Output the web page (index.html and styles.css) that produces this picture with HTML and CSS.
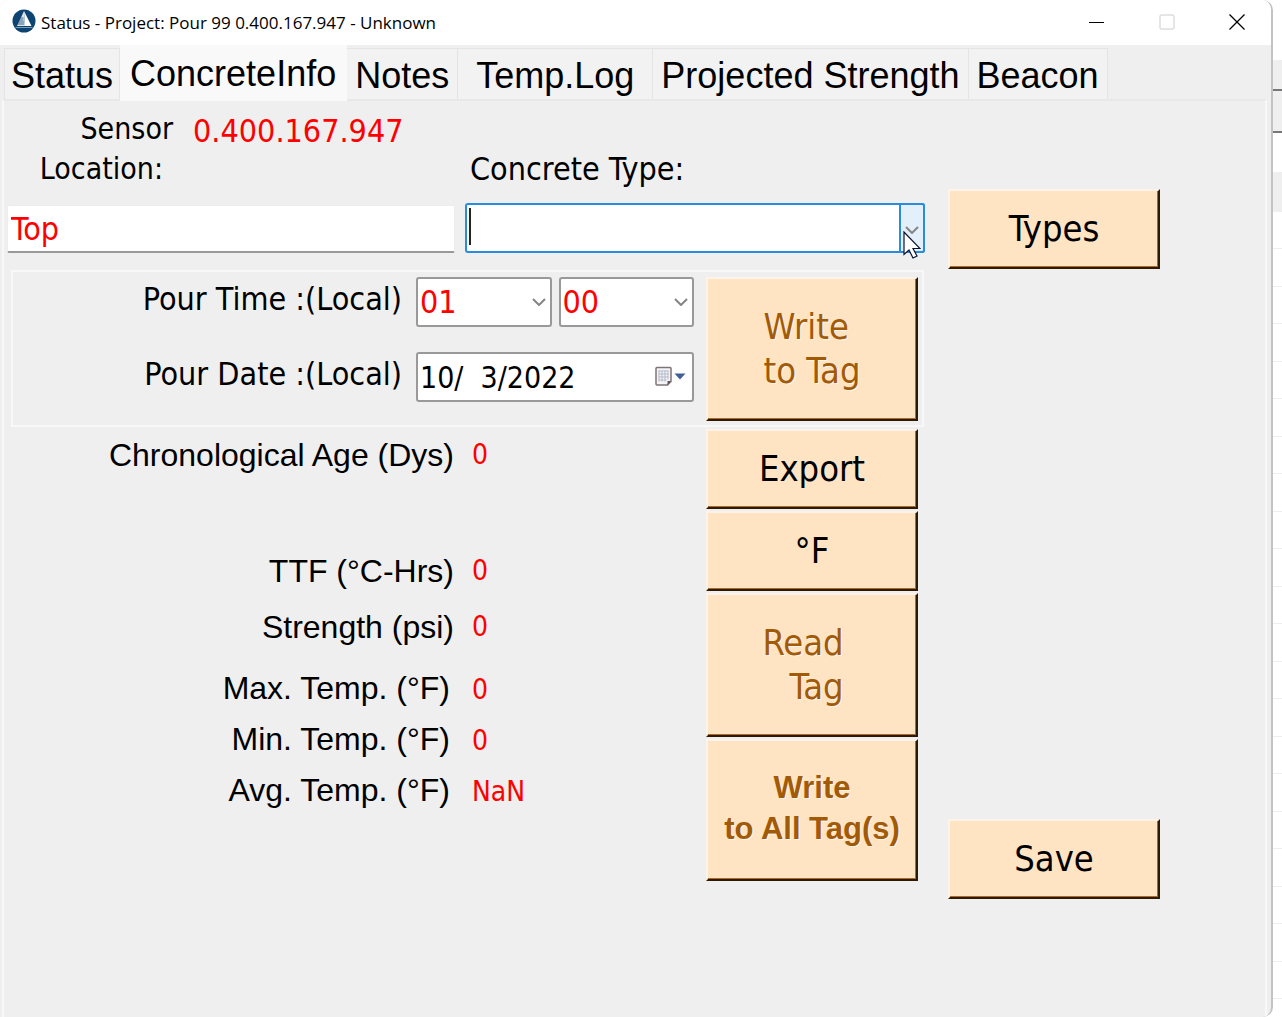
FILE: index.html
```html
<!DOCTYPE html>
<html lang="en">
<head>
  <meta charset="utf-8">
  <title>Status - Project: Pour 99 0.400.167.947 - Unknown</title>
  <link rel="stylesheet" href="styles.css">
</head>
<body>
  <div class="window">
    <!-- Title bar -->
    <header class="titlebar">
      <svg class="app-icon" viewBox="0 0 24 24" aria-hidden="true">
        <circle cx="12" cy="12" r="11.5" fill="#0d4471"/>
        <path d="M12 2L19.500 17H13z" fill="#fff"/>
        <path d="M12 2L13 17H5z" fill="#dde5ec"/>
        <path d="M8.500 9h3M7.500 11h4M6.500 13h5.500M5.500 15h6.500" stroke="#0d4471" stroke-width=".8"/>
        <path d="M3.500 18.500h17" stroke="#7f9cb5" stroke-width="1"/>
      </svg>
      <h1>Status - Project: Pour 99 0.400.167.947 - Unknown</h1>
      <div class="window-controls">
        <button type="button" aria-label="Minimize"><svg viewBox="0 0 16 16"><path d="M0 8.500h15" stroke="#000"/></svg></button>
        <button type="button" aria-label="Maximize" disabled><svg viewBox="0 0 16 16"><rect x="1" y="1" width="14" height="14" rx="1" fill="none" stroke="#ccc"/></svg></button>
        <button type="button" aria-label="Close"><svg viewBox="0 0 16 16"><path d="M.5 .5l15 15M15.500 .5l-15 15" stroke="#000" stroke-width="1.300"/></svg></button>
      </div>
    </header>

    <!-- Tabs -->
    <nav class="tabs" role="tablist">
      <button type="button" class="tab" role="tab">Status</button>
      <button type="button" class="tab active" role="tab" aria-selected="true">ConcreteInfo</button>
      <button type="button" class="tab" role="tab">Notes</button>
      <button type="button" class="tab log" role="tab">Temp.Log</button>
      <button type="button" class="tab" role="tab">Projected Strength</button>
      <button type="button" class="tab" role="tab">Beacon</button>
    </nav>

    <!-- ConcreteInfo page -->
    <form class="page">
      <div class="main">
        <div class="top-fields">
          <div class="location">
            <label class="sensor-label" for="location">Sensor<br><span class="second">Location:</span></label>
            <output class="sensor-id">0.400.167.947</output>
            <input type="text" id="location" class="text-box" value="Top">
          </div>
          <div class="concrete">
            <label for="concrete-type">Concrete Type:</label>
            <div class="combo focused">
              <select id="concrete-type"><option></option></select>
              <span class="caret"></span>
              <span class="drop">
                <svg class="chevron" viewBox="0 0 14 8"><path d="M1 1l6 6 6-6"/></svg>
              </span>
              <svg class="pointer" viewBox="0 0 18 28"><path d="M1 1v22.500l5-4.500 4 8 4-2-4-7.500h7z" fill="#fff" stroke="#0b1230" stroke-width="1.200"/></svg>
            </div>
          </div>
        </div>

        <div class="pour-group">
          <div class="pour-fields">
            <label for="pour-hour">Pour Time :(Local)</label>
            <div class="pour-time">
              <div class="combo">
                <select id="pour-hour"><option>01</option></select>
                <svg class="chevron" viewBox="0 0 14 8"><path d="M1 1l6 6 6-6"/></svg>
              </div>
              <div class="combo">
                <select aria-label="Pour minute"><option>00</option></select>
                <svg class="chevron" viewBox="0 0 14 8"><path d="M1 1l6 6 6-6"/></svg>
              </div>
            </div>
            <label for="pour-date">Pour Date :(Local)</label>
            <div class="combo">
              <input type="text" id="pour-date" value="10/  3/2022">
              <svg class="calendar" viewBox="0 0 32 22" aria-hidden="true">
                <path d="M2 2.500q0-1 1-1h13q1 0 1 1v13l-3.500 3.500H3q-1 0-1-1z" fill="#f4f4f6" stroke="#7d7474" stroke-width="1.500"/>
                <path d="M4.500 5h10M4.500 8h10M4.500 11h10M4.500 14h8M5 4.500v11M8 4.500v11M11 4.500v11M14 4.500v9" stroke="#b3bac8" stroke-width="1"/>
                <path d="M17 15h-3.500v4z" fill="#5d5555"/>
                <path d="M20.500 7.500h11l-5.500 6z" fill="#3f5f96"/>
              </svg>
            </div>
          </div>
          <button type="button" class="push tall" disabled><span class="lines">Write<br>to Tag</span></button>
        </div>

        <div class="lower">
          <dl class="readings">
            <div class="reading age"><dt>Chronological Age (Dys)</dt><dd>0</dd></div>
            <div class="reading"><dt>TTF (°C-Hrs)</dt><dd>0</dd></div>
            <div class="reading"><dt>Strength (psi)</dt><dd>0</dd></div>
            <div class="reading temp first"><dt>Max. Temp. (°F)</dt><dd>0</dd></div>
            <div class="reading temp"><dt>Min. Temp. (°F)</dt><dd>0</dd></div>
            <div class="reading temp"><dt>Avg. Temp. (°F)</dt><dd>NaN</dd></div>
          </dl>
          <div class="actions">
            <button type="button" class="push">Export</button>
            <button type="button" class="push">°F</button>
            <button type="button" class="push tall" disabled><span class="lines right">Read<br>Tag</span></button>
            <button type="button" class="push tall bold" disabled>Write<br>to All Tag(s)</button>
          </div>
        </div>
      </div>

      <div class="side">
        <button type="button" class="push">Types</button>
        <button type="submit" class="push">Save</button>
      </div>
    </form>
  </div>

  <!-- Edge of the window behind -->
  <div class="behind" aria-hidden="true">
    <div class="behind-bar"></div>
    <div class="behind-box"></div>
    <div class="behind-row"></div>
    <div class="behind-lines"></div>
  </div>
</body>
</html>
```
FILE: styles.css
```css
* {
  box-sizing: border-box;
}

body {
  margin: 0;
  display: flex;
  min-height: 100vh;
  background-color: #fff;
  font-family: "DejaVu Sans Condensed", "DejaVu Sans", Tahoma, sans-serif;
  font-size: 32px;
  line-height: 40px;
  color: #000;
}

button,
input,
select {
  font: inherit;
  color: inherit;
  margin: 0;
}

.window {
  flex: 1;
  display: flex;
  flex-direction: column;
  background-color: #efefef;
  border-right: 2px solid #c3c3c3;
  border-radius: 8px 10px 10px 0;
  overflow: hidden;
}

/* Title bar */
.titlebar {
  display: flex;
  align-items: center;
  height: 45px;
  padding-left: 12px;
  background-color: #fff;
}

.app-icon {
  width: 24px;
  height: 24px;
  margin-bottom: 4px;
}

.titlebar h1 {
  flex: 1;
  margin: 0 0 0 5px;
  font: 17px/24px "Open Sans", "Segoe UI", sans-serif;
}

.window-controls {
  display: flex;
  margin-bottom: 2px;
}

.window-controls button {
  width: 70px;
  height: 42px;
  padding: 0 0 0 2px;
  border: none;
  background: none;
  line-height: 0;
}

.window-controls svg {
  width: 16px;
  height: 16px;
}

/* Tabs */
.tabs {
  display: flex;
  align-items: flex-end;
  height: 54px;
  padding-left: 4px;
  font: 36px/44px "Liberation Sans", Arial, sans-serif;
}

.tab {
  height: 51px;
  padding: 4px 8px 0;
  border: 1px solid #e4e4e4;
  border-width: 1px 1px 0 0;
  background-color: #f2f2f2;
}

.tab:first-child {
  padding: 4px 6px 0;
  border-left-width: 1px;
}

.tab.active {
  position: relative;
  height: 56px;
  margin-bottom: -2px;
  padding: 0 10px;
  border-color: #f9f9f9;
  background-color: #f9f9f9;
}

.tab.log {
  padding: 4px 18px 0;
}

/* Tab page */
.page {
  flex: 1;
  display: flex;
  align-items: flex-start;
  gap: 23px;
  margin: 0 4px 0 2px;
  padding: 8px 105px 24px 3px;
  border: 2px solid #f8f8f8;
  border-top-color: #e8e8e8;
  border-bottom: none;
}

.main {
  flex: 1;
}

.top-fields {
  display: grid;
  grid-template-columns: 448fr 460fr;
  gap: 10px;
}

.location {
  display: grid;
  grid-template-columns: 166px 1fr;
  column-gap: 20px;
}

.sensor-label {
  font-size: 30px;
  text-align: right;
}

.sensor-label .second {
  padding-right: 10px;
}

.sensor-id {
  color: #f00;
  line-height: 44px;
}

.text-box {
  grid-column: 1 / 3;
  width: 100%;
  height: 48px;
  margin-top: 16px;
  padding: 0 3px;
  border: 1px solid #ececec;
  border-bottom: 2px solid #999;
  border-radius: 2px;
  background-color: #fff;
  color: #f00;
}

.concrete {
  display: flex;
  flex-direction: column;
  justify-content: flex-end;
}

.concrete label {
  padding-left: 5px;
}

/* Drop-downs and the date box */
.combo {
  position: relative;
  flex: 1;
}

.concrete .combo {
  flex: none;
  margin-top: 14px;
}

.combo select,
.combo input {
  display: block;
  width: 100%;
  height: 50px;
  padding: 0 2px;
  appearance: none;
  border: 2px solid #999;
  border-radius: 3px;
  background-color: #fff;
}

.combo input {
  font-size: 30px;
}

.combo select {
  color: #f00;
}

.combo.focused select {
  border-color: #2a8cdc;
}

.chevron {
  position: absolute;
  right: 6px;
  top: 21px;
  width: 14px;
  height: 8px;
  fill: none;
  stroke: #858585;
  stroke-width: 2;
}

.drop {
  position: absolute;
  top: 0;
  right: 0;
  width: 26px;
  height: 50px;
  border: 2px solid #2a8cdc;
  border-radius: 0 3px 3px 0;
  background-color: #e3f0fa;
}

.drop .chevron {
  right: 4px;
}

.caret {
  position: absolute;
  top: 5px;
  left: 4px;
  width: 2px;
  height: 37px;
  background-color: #222;
}

.pointer {
  position: absolute;
  top: 28px;
  right: 4px;
  width: 18px;
  height: 28px;
}

.calendar {
  position: absolute;
  top: 14px;
  right: 8px;
  width: 32px;
  height: 22px;
}

/* Pour time and date group */
.pour-group {
  display: flex;
  gap: 12px;
  margin: 17px 1px 0 4px;
  padding: 5px 4px 4px;
  border: 2px solid #f8f8f8;
}

.pour-fields {
  flex: 1;
  display: grid;
  grid-template-columns: 1fr 278px;
  column-gap: 14px;
  row-gap: 25px;
  align-content: start;
  text-align: right;
}

.pour-fields label {
  padding-top: 2px;
}

.pour-time {
  display: flex;
  gap: 7px;
}

/* Push buttons */
.push {
  width: 212px;
  height: 80px;
  padding: 0;
  border: 2px solid #fdf3e8;
  border-right-color: #2b1a08;
  border-bottom-color: #2b1a08;
  background-color: #ffe4c4;
  box-shadow: inset -1px -1px 0 #b06a1c;
  font-size: 36px;
  line-height: 44px;
}

.push.tall {
  height: 144px;
}

.push:disabled {
  color: #a05a08;
  text-shadow: 1px 1px 0 #fff4ea;
}

.push .lines {
  display: inline-block;
  text-align: left;
}

.push .right {
  padding-right: 18px;
  text-align: right;
}

.push.bold {
  height: 142px;
  padding-bottom: 4px;
  font: bold 31px/41px "Liberation Sans", Arial, sans-serif;
}

/* Readings */
.lower {
  display: flex;
}

.readings {
  flex: 1;
  margin: 0;
}

.reading {
  display: grid;
  grid-template-columns: 1fr 234px;
  column-gap: 18px;
  align-items: center;
  height: 56px;
}

.reading dt {
  font: 32px/40px "Liberation Sans", Arial, sans-serif;
  text-align: right;
}

.reading dd {
  margin: 0;
  font-size: 28px;
  color: #f00;
}

.age {
  margin-bottom: 60px;
}

.temp {
  height: 51px;
}

.temp.first {
  margin-top: 7px;
}

.temp dt {
  padding-right: 4px;
}

.temp dd {
  padding-top: 4px;
}

.actions {
  display: flex;
  flex-direction: column;
  gap: 2px;
  margin-right: 7px;
  padding-top: 2px;
}

/* Right-hand buttons */
.side {
  display: flex;
  flex-direction: column;
  gap: 550px;
  padding-top: 80px;
}

/* Window behind */
.behind {
  width: 9px;
  padding-top: 60px;
}

.behind-bar {
  height: 31px;
  background-color: #efefef;
  border-bottom: 2px solid #777;
}

.behind-box {
  height: 42px;
  background-color: #efefef;
  border-bottom: 2px solid #777;
}

.behind-row {
  height: 40px;
  margin-top: 39px;
  background-color: #efefef;
}

.behind-lines {
  height: calc(100vh - 212px);
  background: repeating-linear-gradient(#fff 0 36px, #eee 36px 37px, #fff 37px 74px, #eee 74px 75px);
}
```
